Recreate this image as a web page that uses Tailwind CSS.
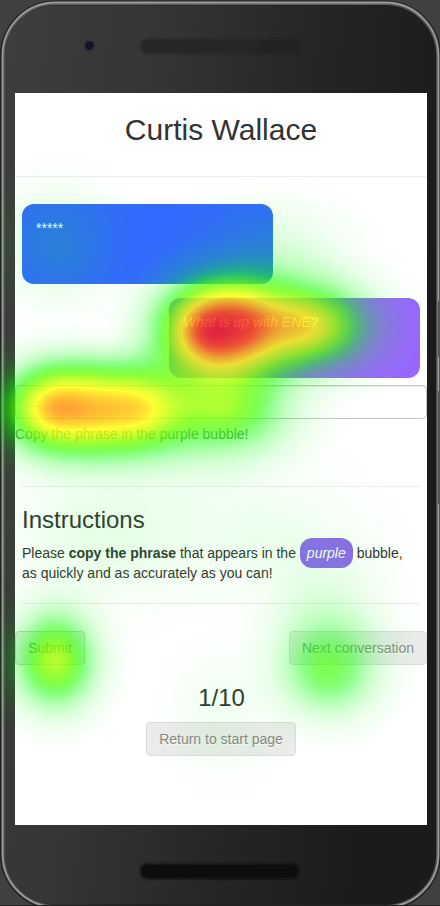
<!DOCTYPE html>
<html lang="en">
<head>
<meta charset="utf-8">
<title>Curtis Wallace</title>
<script src="https://cdn.jsdelivr.net/npm/@tailwindcss/browser@4"></script>
</head>
<body class="relative h-[906px] w-[440px] overflow-hidden bg-[#404040] font-['Liberation_Sans',Arial,sans-serif] text-sm leading-5 text-[#333]">
<!-- phone casing -->
<svg class="absolute inset-0" width="440" height="906" viewBox="0 0 440 906">
  <defs>
    <linearGradient id="case" x1="0" y1="0" x2="1" y2=".25"><stop offset="0" stop-color="#3e3e3e"/><stop offset=".35" stop-color="#353535"/><stop offset=".7" stop-color="#252525"/><stop offset="1" stop-color="#1b1b1b"/></linearGradient>
    <linearGradient id="slot"><stop offset="0" stop-color="#272727"/><stop offset="1" stop-color="#242424"/></linearGradient>
    <filter id="soft"><feGaussianBlur stdDeviation="1"/></filter>
  </defs>
  <rect x="2.500" y="3" width="436" height="904" rx="53" fill="url(#case)" stroke="#232323" stroke-width="5"/>
  <rect x="3.800" y="4" width="433.400" height="902" rx="52" fill="none" stroke="#5a5a5a" stroke-width="2"/>
  <rect x="2.500" y="2.500" width="436" height="904.500" rx="53" fill="none" stroke="#9c9c9c" stroke-width="1.800"/>
  <rect x="438" y="301" width="2" height="56" fill="#555"/><rect x="438" y="391" width="2" height="113" fill="#555"/>
  <circle cx="89.500" cy="45.500" r="6.500" fill="#343239" filter="url(#soft)"/><circle cx="89.500" cy="45.500" r="4.500" fill="#171325"/>
  <path d="M147 39H299V54H147Q140 52 140 46T147 39Z" fill="url(#slot)" filter="url(#soft)"/>
  <rect x="140" y="863.500" width="159" height="15.500" rx="7" fill="#101010" filter="url(#soft)"/>
  <rect x="0" y="905" width="440" height="1" fill="#222"/>
</svg>
<main class="relative ml-[15px] mt-[93px] flex h-[732px] w-[412px] flex-col bg-white">
  <header class="h-[84px] border-b border-[#eee] pt-5 text-center"><h1 class="text-[30px] leading-[33px]">Curtis Wallace</h1></header>
  <section class="mt-[27px] flex h-[174px] flex-col justify-between px-[7px] text-white">
    <div class="h-20 w-[251px] rounded-xl bg-[#3369ff] px-[14px] pt-[14px]">*****</div>
    <div class="h-20 w-[251px] self-end rounded-xl bg-[#9966ff] px-[14px] pt-[14px] italic">What is up with ENE?</div>
  </section>
  <div class="mt-[7px] h-[34px] shrink-0 rounded border border-[#c4c4c4] px-3 py-1.5 text-[#999] shadow-[inset_0_1px_1px_rgba(0,0,0,0.08)]">...</div>
  <p class="mt-[5px] text-[#737373]">Copy the phrase in the purple bubble!</p>
  <hr class="mx-[7px] mt-[42px] border-[#eee]">
  <section class="h-[116px] px-[7px] pt-5">
    <h2 class="text-2xl leading-[26px]">Instructions</h2>
    <p class="mt-[10px] whitespace-nowrap">Please <b>copy the phrase</b> that appears in the <i class="rounded-xl bg-[#9068f2] px-[7px] py-[7px] text-white">purple</i> bubble,<br>as quickly and as accurately as you can!</p>
  </section>
  <hr class="mx-[7px] border-[#eee]">
  <div class="mt-[27px] flex justify-between">
    <button class="h-[34px] w-[70px] rounded border border-[#ccc] bg-[#eee] text-[#777]">Submit</button>
    <button class="h-[34px] w-[138px] rounded border border-[#dcdcdc] bg-[#ebebeb] text-[#898989] [text-shadow:0_1px_0_#fff]">Next conversation</button>
  </div>
  <div class="mt-5 pl-px text-center text-2xl leading-[26px]">1/10</div>
  <button class="mt-[11px] h-[34px] w-[150px] self-center rounded border border-[#dcdcdc] bg-[#ebebeb] text-[#858585] [text-shadow:0_1px_0_#fff]">Return to start page</button>
</main>
<!-- attention heatmap: density is accumulated in alpha, then mapped to colour -->
<svg class="pointer-events-none absolute inset-0" width="440" height="906" viewBox="0 0 440 906">
  <defs>
    <radialGradient id="g"><stop offset="0" stop-color="#000"/><stop offset=".1" stop-opacity=".956"/><stop offset=".2" stop-opacity=".835"/><stop offset=".3" stop-opacity=".667"/><stop offset=".4" stop-opacity=".487"/><stop offset=".5" stop-opacity=".325"/><stop offset=".6" stop-opacity=".198"/><stop offset=".7" stop-opacity=".11"/><stop offset=".8" stop-opacity=".056"/><stop offset=".9" stop-opacity=".02"/><stop offset="1" stop-opacity="0"/></radialGradient>
    <filter id="heat" filterUnits="userSpaceOnUse" x="0" y="0" width="440" height="906" color-interpolation-filters="sRGB">
      <feGaussianBlur stdDeviation="4"/>
      <feColorMatrix values="0 0 0 1 0  0 0 0 1 0  0 0 0 1 0  0 0 0 1 0"/>
      <feComponentTransfer>
        <feFuncR type="table" tableValues="0 0 0 .05 .25 .48 .75 1 1 1 .93"/>
        <feFuncG type="table" tableValues="1 1 1 1 1 1 1 1 .7 .3 0"/>
        <feFuncB type="table" tableValues="0 0 0 0 0 0 0 0 0 0 .15"/>
        <feFuncA type="table" tableValues="0 .12 .27 .47 .68 .8 .8 .8 .8 .8 .84"/>
      </feComponentTransfer>
    </filter>
  </defs>
  <g filter="url(#heat)" fill="url(#g)">
    <ellipse cx="213" cy="331" rx="112" ry="98" opacity=".96"/>
    <ellipse cx="242" cy="326" rx="90" ry="72" opacity=".75"/>
    <ellipse cx="303" cy="326" rx="130" ry="86" opacity=".71"/>
    <ellipse cx="270" cy="260" rx="140" ry="100" opacity=".14"/>
    <ellipse cx="54" cy="408" rx="102" ry="86" opacity=".76"/>
    <ellipse cx="96" cy="409" rx="110" ry="84" opacity=".6"/>
    <ellipse cx="140" cy="409" rx="105" ry="84" opacity=".64"/>
    <ellipse cx="225" cy="407" rx="128" ry="92" opacity=".5"/>
    <ellipse cx="55" cy="660" rx="80" ry="94" opacity=".58"/>
    <ellipse cx="329" cy="670" rx="92" ry="88" opacity=".36"/>
    <ellipse cx="326" cy="625" rx="115" ry="120" opacity=".13"/>
    <ellipse cx="58" cy="244" rx="110" ry="110" opacity=".12"/>
    <ellipse cx="105" cy="545" rx="190" ry="120" opacity=".08"/>
    <ellipse cx="150" cy="465" rx="250" ry="110" opacity=".05"/>
    <ellipse cx="280" cy="540" rx="180" ry="110" opacity=".06"/>
    <ellipse cx="223" cy="713" rx="100" ry="120" opacity=".05"/>
  </g>
</svg>
</body>
</html>
